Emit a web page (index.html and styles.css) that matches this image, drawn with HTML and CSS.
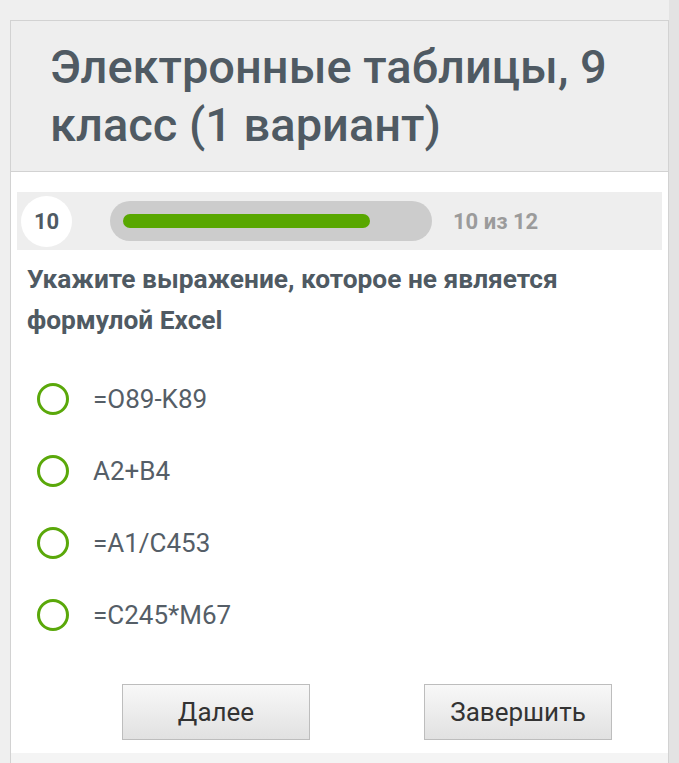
FILE: index.html
```html
<!DOCTYPE html>
<html lang="ru">
<head>
<meta charset="utf-8">
<title>Электронные таблицы, 9 класс (1 вариант)</title>
<link rel="stylesheet" href="styles.css">
</head>
<body>
<div class="card">
  <div class="header">
    <h1 class="title">Электронные таблицы, 9 класс (1 вариант)</h1>
  </div>
  <div class="content">
    <div class="progress-row">
      <div class="num">10</div>
      <div class="track"><div class="fill" style="width:247px"></div></div>
      <div class="count">10 из 12</div>
    </div>
    <div class="question">Укажите выражение, которое не является формулой Excel</div>
    <div class="options">
      <div class="option"><span class="radio"></span><span class="label">=O89-K89</span></div>
      <div class="option"><span class="radio"></span><span class="label">A2+B4</span></div>
      <div class="option"><span class="radio"></span><span class="label">=A1/C453</span></div>
      <div class="option"><span class="radio"></span><span class="label">=C245*M67</span></div>
    </div>
    <div class="buttons">
      <button class="btn">Далее</button>
      <button class="btn">Завершить</button>
    </div>
  </div>
  <div class="footer"></div>
</div>
</body>
</html>
```
FILE: styles.css
```css
html, body {
  margin: 0;
  padding: 0;
}
body {
  padding: 20px 10px 0 10px;
  background: linear-gradient(to right, #efefef calc(100% - 10px), #e3e3e3 calc(100% - 10px));
  font-family: Roboto, "Liberation Sans", sans-serif;
  height: 763px;
  box-sizing: border-box;
  overflow: hidden;
}
.card {
  border: 1px solid #d2d2d2;
  background: #ffffff;
}
.header {
  background: #eeeeee;
  border-bottom: 1px solid #d2d2d2;
  padding: 17px 20px 17px 39px;
}
.title {
  margin: 0;
  font-size: 47px;
  line-height: 58px;
  font-weight: 500;
  color: #4f5a63;
}
.content {
  padding: 20px 6px 13px 6px;
}
.progress-row {
  display: flex;
  align-items: center;
  height: 58px;
  background: #eeeeee;
}
.num {
  margin-left: 4px;
  width: 51px;
  height: 51px;
  border-radius: 50%;
  background: #ffffff;
  display: flex;
  align-items: center;
  justify-content: center;
  font-weight: 700;
  font-size: 22px;
  color: #4f5a63;
}
.track {
  margin-left: 38px;
  width: 322px;
  height: 40px;
  border-radius: 20px;
  background: #cccccc;
  padding: 13px;
  box-sizing: border-box;
}
.fill {
  height: 14px;
  border-radius: 7px;
  background: #58a700;
}
.count {
  margin-left: 21px;
  font-weight: 700;
  font-size: 22px;
  color: #9b9b9b;
}
.question {
  margin-top: 9px;
  padding-left: 10px;
  font-weight: 700;
  font-size: 26.3px;
  line-height: 41px;
  color: #4f5a63;
}
.options {
  margin-top: 22px;
}
.option {
  display: flex;
  align-items: center;
  height: 72px;
}
.radio {
  margin-left: 20px;
  width: 32px;
  height: 32px;
  border: 3px solid #5aa80a;
  border-radius: 50%;
  box-sizing: border-box;
}
.label {
  margin-left: 24px;
  font-size: 26px;
  color: #555e67;
}
.buttons {
  display: flex;
  gap: 114px;
  padding-left: 105px;
  margin-top: 33px;
}
.btn {
  width: 188px;
  height: 56px;
  border: 1px solid #bdbdbd;
  background: linear-gradient(#f8f8f8, #e1e1e1);
  font-family: Roboto, "Liberation Sans", sans-serif;
  font-size: 26px;
  color: #333333;
  padding: 0;
}
.footer {
  height: 30px;
  background: #f4f4f4;
}
```
